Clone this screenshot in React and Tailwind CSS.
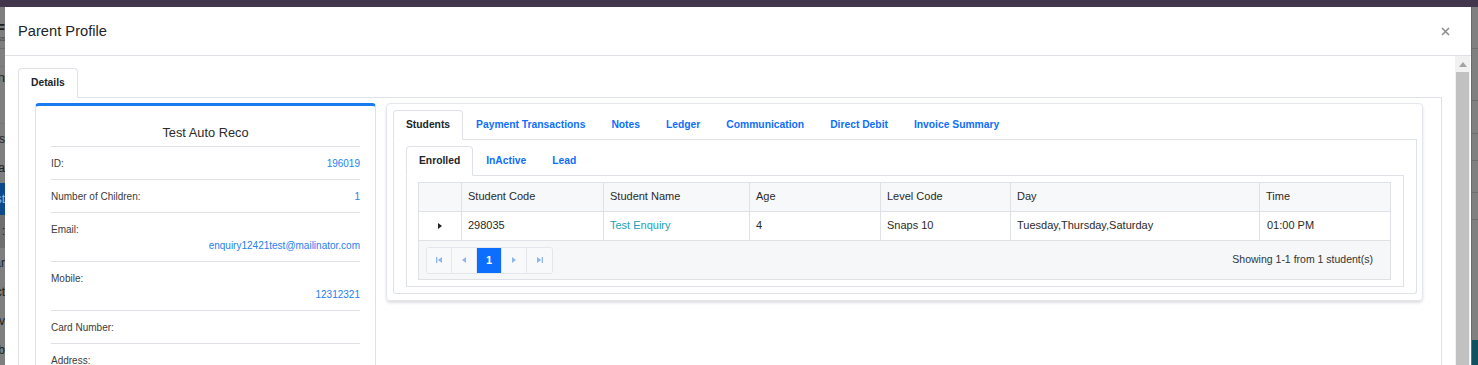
import React from "react";

function LeftStrip() {
  const T = ({ h, children, cls = "" }) => (
    <div className={`flex justify-end items-center overflow-hidden whitespace-nowrap ${h} ${cls}`}>{children}</div>
  );
  return (
    <div className="w-[5px] shrink-0 flex flex-col bg-[#7f7f7f] text-[#1e1e1e] text-[13px] leading-none overflow-hidden">
      <T h="h-[16px]"><span></span></T>
      <T h="h-[12px]"><span className="font-bold text-[15px]">AF</span></T>
      <T h="h-[8px]"><span className="text-[7px] text-[#444]">ss</span></T>
      <div className="h-[6px]" />
      <div className="h-px bg-[#6d6d6d]" />
      <div className="h-[17px]" />
      <div className="h-px bg-[#777]" />
      <T h="h-[22px]"><span>un</span></T>
      <div className="h-[36px]" />
      <div className="h-px bg-[#777]" />
      <T h="h-[30px]" cls="text-[12px]"><span>Bas</span></T>
      <T h="h-[30px]" cls="text-[12px]"><span>Da</span></T>
      <T h="h-[33px]" cls="bg-[#0c4a8d] text-[#9fb9d8] text-[12px]"><span>Lst</span></T>
      <T h="h-[34px]" cls="bg-[#6f6f6f] text-[12px]"><span>el :</span></T>
      <T h="h-[30px]" cls="text-[12px]"><span>Car</span></T>
      <T h="h-[30px]" cls="text-[12px]"><span>Act</span></T>
      <T h="h-[30px]" cls="text-[12px]"><span>Rev</span></T>
      <T h="h-[30px]" cls="text-[12px]"><span>Ab</span></T>
    </div>
  );
}

function RightStrip() {
  const L = () => <div className="h-px bg-[#6e6e6e] shrink-0" />;
  return (
    <div className="w-[7px] shrink-0 flex flex-col bg-[#808080] border-l border-[#6a6a6a]">
      <div className="h-[41px] shrink-0" />
      <L />
      <div className="h-[51px] shrink-0" />
      <L />
      <div className="h-[32px] shrink-0" />
      <L />
      <div className="h-[26px] shrink-0" />
      <L />
      <div className="h-[31px] shrink-0" />
      <L />
      <div className="h-[26px] shrink-0" />
      <L />
      <div className="h-[120px] shrink-0" />
      <div className="flex-1 bg-[#0f5260]" />
    </div>
  );
}

function Tab({ label, active }) {
  return active ? (
    <div className="h-[30px] -mb-px px-3 flex items-center border border-[#dee2e6] border-b-white bg-white rounded-t-[4px] font-bold text-[10.3px] text-[#212529]">
      {label}
    </div>
  ) : (
    <div className="h-[30px] -mb-px px-3 flex items-center border border-transparent font-bold text-[10.3px] text-[#0d6efd]">
      {label}
    </div>
  );
}

function CardRow({ label, value, inline }) {
  return (
    <div className="pt-[9px] pb-[8px] border-b border-[#dee2e6] text-[10px] leading-[15px]">
      {inline ? (
        <div className="flex justify-between">
          <span className="text-[#3b3b3b]">{label}</span>
          <span className="text-[#2680f0]">{value}</span>
        </div>
      ) : (
        <>
          <div className="text-[#3b3b3b]">{label}</div>
          <div className="mt-px text-right text-[#2680f0] h-[15px]">{value}</div>
        </>
      )}
    </div>
  );
}

function PagerBtn({ children, active, last }) {
  return (
    <div
      className={`w-[25px] h-[25px] flex items-center justify-center ${last ? "" : "border-r border-[#e3e6ea]"} ${
        active ? "bg-[#0d6efd] text-white font-bold text-[11px]" : "bg-[#f8f9fb]"
      }`}
    >
      {children}
    </div>
  );
}

const pc = "#8fb6ec";

export default function App() {
  const rows = [
    { label: "ID:", value: "196019", inline: true },
    { label: "Number of Children:", value: "1", inline: true },
    { label: "Email:", value: "enquiry12421test@mailinator.com" },
    { label: "Mobile:", value: "12312321" },
    { label: "Card Number:", value: "", inline: true },
    { label: "Address:", value: "" },
  ];
  const cols = [
    { w: "w-[43px]", t: "" },
    { w: "w-[142px]", t: "Student Code" },
    { w: "w-[146px]", t: "Student Name" },
    { w: "w-[131px]", t: "Age" },
    { w: "w-[130px]", t: "Level Code" },
    { w: "w-[249px]", t: "Day" },
    { w: "w-[131px]", t: "Time" },
  ];
  return (
    <div className="w-[1478px] h-[365px] overflow-hidden flex flex-col bg-[#7f7f7f] font-['Liberation_Sans',Arial,sans-serif] text-[#212529]">
      <div className="h-[7px] shrink-0 bg-[#41364b]" />
      <div className="flex flex-1 min-h-0">
        <LeftStrip />
        {/* Modal */}
        <div className="w-[1466px] shrink-0 bg-white flex flex-col min-h-0 overflow-hidden">
          <div className="h-[49px] shrink-0 border-b border-[#dee2e6] flex items-center justify-between pl-[13px] pr-[21px]">
            <div className="text-[14.7px] text-[#212529]">Parent Profile</div>
            <svg width="9" height="9" viewBox="0 0 9 9">
              <path d="M1 1 L8 8 M8 1 L1 8" stroke="#8a8a8a" strokeWidth="1.5" />
            </svg>
          </div>
          <div className="flex flex-1 min-h-0">
            <div className="flex-1 min-w-0 flex flex-col pl-[13px] pr-[13px] pt-[12px]">
              <div className="flex border-b border-[#dee2e6]">
                <Tab label="Details" active />
              </div>
              <div className="flex-1 border-x border-[#dee2e6] pl-[16px] pr-[18px] pt-[5px] flex items-start gap-[10px]">
                {/* Left card */}
                <div className="w-[341px] shrink-0 border border-[#dee2e6] border-t-[3px] border-t-[#1a7bf0] rounded-[4px] px-[15px] pt-[17px] pb-[20px]">
                  <div className="text-center text-[12.8px] leading-[20px] pb-[3px] border-b border-[#dee2e6] text-[#2b2b2b]">
                    Test Auto Reco
                  </div>
                  {rows.map((r) => (
                    <CardRow key={r.label} {...r} />
                  ))}
                </div>
                {/* Right card */}
                <div className="flex-1 min-w-0 border border-[#e3e6ea] rounded-[4px] shadow-[0_2px_3px_rgba(0,0,0,0.13)] pl-[6px] pr-[5px] pt-[6px] pb-[6px]">
                  <div className="flex border-b border-[#dee2e6]">
                    <Tab label="Students" active />
                    <Tab label="Payment Transactions" />
                    <Tab label="Notes" />
                    <Tab label="Ledger" />
                    <Tab label="Communication" />
                    <Tab label="Direct Debit" />
                    <Tab label="Invoice Summary" />
                  </div>
                  <div className="border-x border-b border-[#dee2e6] pl-[12px] pr-[12px] pt-[6px] pb-[6px] rounded-b-[3px]">
                    <div className="flex border-b border-[#dee2e6]">
                      <Tab label="Enrolled" active />
                      <Tab label="InActive" />
                      <Tab label="Lead" />
                    </div>
                    <div className="border-x border-b border-[#dee2e6] pl-[11px] pr-[12px] pt-[6px] pb-[6px]">
                      <table className="w-full table-fixed border-collapse text-[11px] text-[#2a2a2a]">
                        <colgroup>
                          {cols.map((c, i) => (
                            <col key={i} className={c.w} />
                          ))}
                        </colgroup>
                        <thead>
                          <tr className="bg-[#f7f8fa]">
                            {cols.map((c, i) => (
                              <th key={i} className="h-[29px] p-0 pl-[6px] pb-[2px] text-left font-normal border border-[#dee2e6]">
                                {c.t}
                              </th>
                            ))}
                          </tr>
                        </thead>
                        <tbody>
                          <tr className="bg-white">
                            <td className="h-[29px] p-0 border border-[#dee2e6]">
                              <div className="flex justify-center">
                                <svg width="4" height="6" viewBox="0 0 4 6">
                                  <path d="M0 0 L4 3 L0 6Z" fill="#222" />
                                </svg>
                              </div>
                            </td>
                            <td className="h-[29px] p-0 pl-[6px] pb-[2px] border border-[#dee2e6]">298035</td>
                            <td className="h-[29px] p-0 pl-[6px] pb-[2px] border border-[#dee2e6] text-[#22a2b8]">Test Enquiry</td>
                            <td className="h-[29px] p-0 pl-[6px] pb-[2px] border border-[#dee2e6]">4</td>
                            <td className="h-[29px] p-0 pl-[6px] pb-[2px] border border-[#dee2e6]">Snaps 10</td>
                            <td className="h-[29px] p-0 pl-[6px] pb-[2px] border border-[#dee2e6]">Tuesday,Thursday,Saturday</td>
                            <td className="h-[29px] p-0 pl-[7px] pb-[2px] border border-[#dee2e6]">01:00 PM</td>
                          </tr>
                          <tr className="bg-[#f6f7f9]">
                            <td colSpan={7} className="h-[39px] p-0 border border-[#dee2e6]">
                              <div className="flex items-center justify-between pl-[7px] pr-[17px]">
                                <div className="flex border border-[#e3e6ea] rounded-[3px] overflow-hidden">
                                  <PagerBtn>
                                    <svg width="6" height="6" viewBox="0 0 6 6">
                                      <rect x="0" y="0" width="1.3" height="6" fill={pc} />
                                      <path d="M6 0 L1.8 3 L6 6Z" fill={pc} />
                                    </svg>
                                  </PagerBtn>
                                  <PagerBtn>
                                    <svg width="4" height="6" viewBox="0 0 4 6">
                                      <path d="M4 0 L0 3 L4 6Z" fill={pc} />
                                    </svg>
                                  </PagerBtn>
                                  <PagerBtn active>1</PagerBtn>
                                  <PagerBtn>
                                    <svg width="4" height="6" viewBox="0 0 4 6">
                                      <path d="M0 0 L4 3 L0 6Z" fill={pc} />
                                    </svg>
                                  </PagerBtn>
                                  <PagerBtn last>
                                    <svg width="6" height="6" viewBox="0 0 6 6">
                                      <path d="M0 0 L4.2 3 L0 6Z" fill={pc} />
                                      <rect x="4.7" y="0" width="1.3" height="6" fill={pc} />
                                    </svg>
                                  </PagerBtn>
                                </div>
                                <div className="text-[10.5px] text-[#333]">Showing 1-1 from 1 student(s)</div>
                              </div>
                            </td>
                          </tr>
                        </tbody>
                      </table>
                    </div>
                  </div>
                </div>
              </div>
            </div>
            {/* Scrollbar */}
            <div className="w-[15px] shrink-0 mr-px bg-[#f1f1f1] flex flex-col">
              <div className="h-[16px] shrink-0 flex items-center justify-center">
                <svg width="8" height="5" viewBox="0 0 8 5">
                  <path d="M0 5 L4 0 L8 5Z" fill="#a3a3a3" />
                </svg>
              </div>
              <div className="flex-1 mx-px bg-[#c1c1c1]" />
            </div>
          </div>
        </div>
        <RightStrip />
      </div>
    </div>
  );
}
